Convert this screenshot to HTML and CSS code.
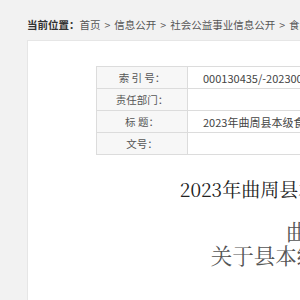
FILE: index.html
```html
<!DOCTYPE html>
<html lang="zh-CN">
<head>
    <meta charset="UTF-8">
    <meta name="viewport" content="width=device-width, initial-scale=1.0">
    <title>2023年曲周县本级食品安全监督抽检信息公告</title>
    <link rel="stylesheet" href="styles.css">
</head>
<body>

<div class="page">
    <div class="crumbs">
        <b>当前位置：</b><a href="#">首页</a><span class="sep">&gt;</span><a href="#">信息公开</a><span class="sep">&gt;</span><a href="#">社会公益事业信息公开</a><span class="sep">&gt;</span><a href="#">食品安全</a>
    </div>

    <div class="panel">
        <table class="meta">
            <tr>
                <th>索 引 号：</th>
                <td>000130435/-202300128</td>
            </tr>
            <tr>
                <th>责任部门：</th>
                <td></td>
            </tr>
            <tr>
                <th>标 题：</th>
                <td>2023年曲周县本级食品安全监督抽检信息公告</td>
            </tr>
            <tr>
                <th>文号：</th>
                <td></td>
            </tr>
        </table>

        <div class="article">
            <h1>2023年曲周县本级食品安全监督抽检信息公告</h1>
            <div class="issuer">
                <p>曲周县市场监管局</p>
                <p>关于县本级食品安全抽检情况通报</p>
            </div>
        </div>
    </div>
</div>

</body>
</html>
```

FILE: styles.css
```css
body {
    margin: 0;
    padding: 0;
    background-color: #f2f2f2;
    font-family: "Microsoft YaHei", "Noto Sans CJK SC", "Noto Sans", sans-serif;
    overflow: hidden;
}
.page {
    width: 690px;
    padding-left: 27px;
}
.crumbs {
    height: 20px;
    line-height: 20px;
    padding-top: 15px;
    padding-bottom: 5px;
    font-size: 10.5px;
    color: #555;
    white-space: nowrap;
}
.crumbs b {
    color: #333;
}
.crumbs a {
    color: #555;
    text-decoration: none;
}
.crumbs .sep {
    margin: 0 4px;
}
.panel {
    background-color: #fff;
    border: 1px solid #e6e6e6;
    padding: 25px 68px 0;
    height: 400px;
}
.meta {
    width: 100%;
    border-collapse: collapse;
    font-size: 10.5px;
}
.meta th,
.meta td {
    height: 21px;
    border: 1px solid #dcdcdc;
    padding: 0;
}
.meta th {
    width: 90px;
    background-color: #f7f7f7;
    color: #555;
    font-weight: normal;
    text-align: center;
}
.meta td {
    padding-left: 15px;
    font-size: 11px;
    color: #444;
    text-align: left;
}
.article {
    margin: 0 -68px;
    text-align: center;
}
.article h1 {
    margin: 22px 0 0;
    font-family: "Noto Serif CJK SC", "Liberation Serif", "Noto Sans CJK SC", serif;
    font-size: 19px;
    font-weight: normal;
    line-height: 24px;
    color: #222;
}
.issuer {
    margin-top: 18px;
    font-family: "Noto Serif CJK SC", "Liberation Serif", "Noto Sans CJK SC", serif;
    font-size: 21.5px;
    line-height: 24px;
    color: #555;
}
.issuer p {
    margin: 0;
}
```
